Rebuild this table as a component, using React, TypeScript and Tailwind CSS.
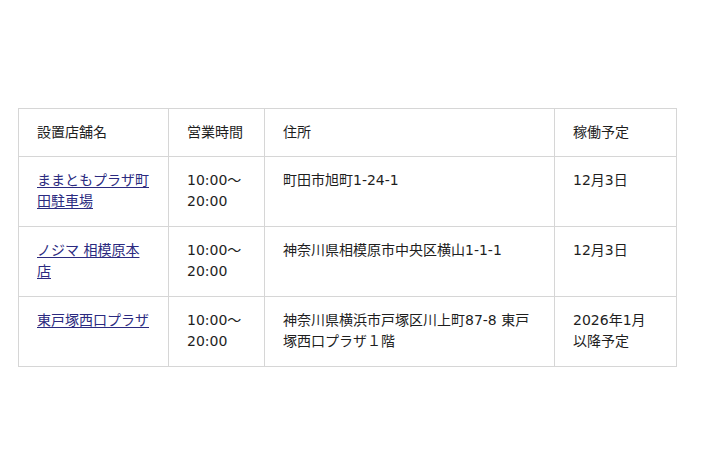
import React from 'react'

type Row = {
  name: string
  hours: string[]
  address: string
  date: string[]
}

const ROWS: Row[] = [
  { name: 'ままともプラザ町田駐車場', hours: ['10:00～', '20:00'], address: '町田市旭町1-24-1', date: ['12月3日'] },
  { name: 'ノジマ 相模原本店', hours: ['10:00～', '20:00'], address: '神奈川県相模原市中央区横山1-1-1', date: ['12月3日'] },
  { name: '東戸塚西口プラザ', hours: ['10:00～', '20:00'], address: '神奈川県横浜市戸塚区川上町87-8 東戸塚西口プラザ１階', date: ['2026年1月', '以降予定'] },
]

const cell = 'border border-[#d6d6d6] px-[18px] pt-[13px] align-top text-left font-normal'

const App: React.FC = () => {
  return (
    <div
      className="w-[710px] h-[474px] bg-white flex items-center pl-[18px] text-[14px] leading-[21px] text-[#1e1e1e]"
      style={{ fontFamily: '"DejaVu Sans", "Noto Sans CJK JP", sans-serif' }}
    >
      <table className="table-fixed border-collapse w-[658px]">
        <colgroup>
          <col className="w-[150px]" />
          <col className="w-[96px]" />
          <col className="w-[290px]" />
          <col className="w-[122px]" />
        </colgroup>
        <thead>
          <tr>
            <th className={`${cell} pb-[13px]`}>設置店舗名</th>
            <th className={`${cell} pb-[13px]`}>営業時間</th>
            <th className={`${cell} pb-[13px]`}>住所</th>
            <th className={`${cell} pb-[13px]`}>稼働予定</th>
          </tr>
        </thead>
        <tbody>
          {ROWS.map((r) => (
            <tr key={r.name}>
              <td className={`${cell} pb-[14px]`}>
                <a href="#" className="text-[#2b2a80] underline underline-offset-2">
                  {r.name}
                </a>
              </td>
              <td className={`${cell} pb-[14px]`}>
                {r.hours.map((h) => (
                  <div key={h}>{h}</div>
                ))}
              </td>
              <td className={`${cell} pb-[14px]`}>{r.address}</td>
              <td className={`${cell} pb-[14px]`}>
                {r.date.map((d) => (
                  <div key={d}>{d}</div>
                ))}
              </td>
            </tr>
          ))}
        </tbody>
      </table>
    </div>
  )
}

export default App
